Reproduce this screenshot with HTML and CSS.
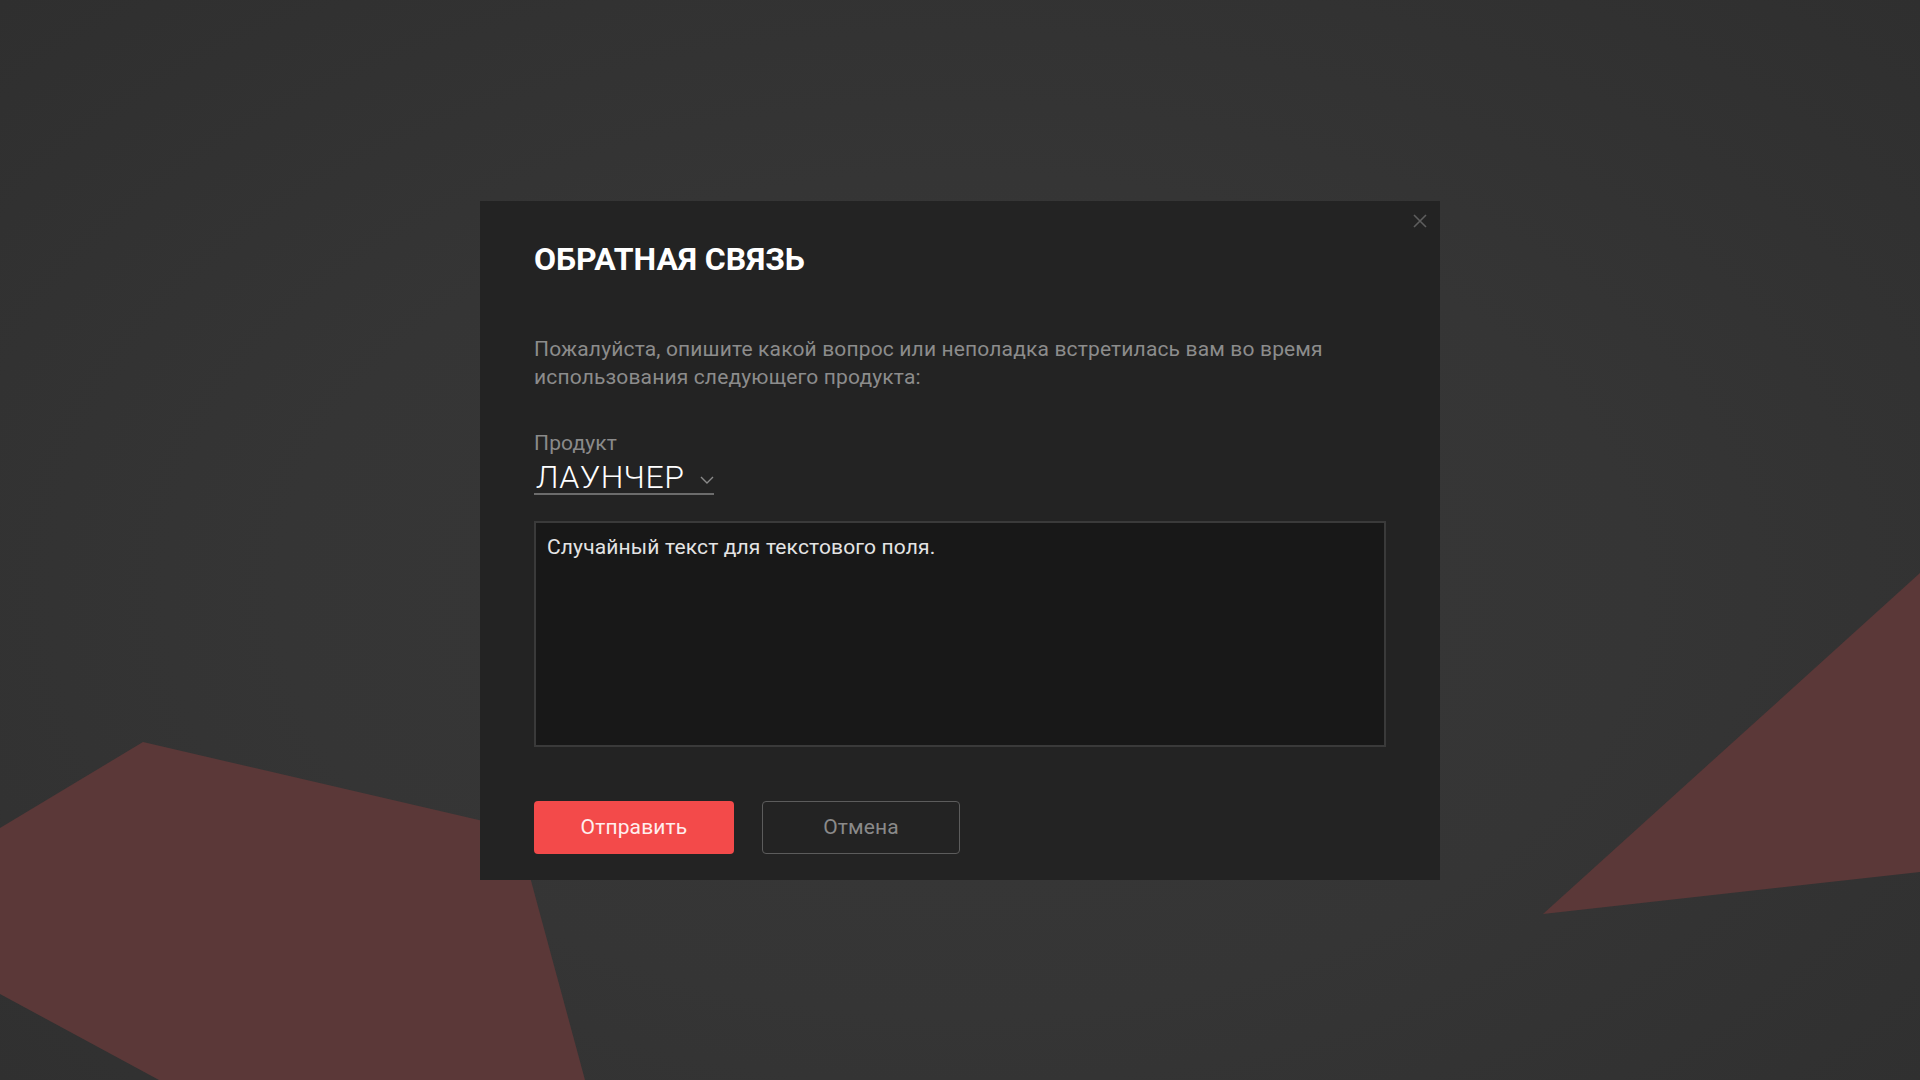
FILE: index.html
```html
<!DOCTYPE html>
<html lang="ru">
<head>
<meta charset="utf-8">
<title>Обратная связь</title>
<link rel="stylesheet" href="styles.css">
</head>
<body>
<div class="screen">
  <svg class="backdrop" width="1920" height="1080" viewBox="0 0 1920 1080" aria-hidden="true">
    <polygon points="0,828 143,742 517,829 585,1080 159,1080 0,994" fill="#5b3838"/>
    <polygon points="1920,573 1543,914 1920,872" fill="#5b3838"/>
  </svg>
  <div class="dialog">
    <button class="close" aria-label="Закрыть">
      <svg width="14" height="14" viewBox="0 0 14 14"><path d="M1 1L13 13M13 1L1 13" stroke="#5e5e5e" stroke-width="1.6" fill="none"/></svg>
    </button>
    <h1 class="title">ОБРАТНАЯ СВЯЗЬ</h1>
    <p class="lead">Пожалуйста, опишите какой вопрос или неполадка встретилась вам во время использования следующего продукта:</p>
    <div class="field">
      <div class="field-label">Продукт</div>
      <div class="select">
        <span class="select-value">ЛАУНЧЕР</span>
        <svg class="chev" width="14" height="8" viewBox="0 0 14 8"><path d="M1 1L7 7L13 1" stroke="#8a8a8a" stroke-width="1.4" fill="none"/></svg>
      </div>
    </div>
    <div class="textarea">Случайный текст для текстового поля.</div>
    <div class="actions">
      <button class="btn btn-primary">Отправить</button>
      <button class="btn btn-secondary">Отмена</button>
    </div>
  </div>
</div>
</body>
</html>
```

FILE: styles.css
```css
* { box-sizing: border-box; }
html, body { margin: 0; padding: 0; }
body {
  width: 1920px;
  height: 1080px;
  overflow: hidden;
  font-family: Roboto, "Noto Sans", "Liberation Sans", sans-serif;
  background: #343434;
}
.screen {
  position: relative;
  width: 1920px;
  height: 1080px;
  display: flex;
  align-items: center;
  justify-content: center;
  background: radial-gradient(ellipse at 50% 55%, #383838 0%, #353535 50%, #2f2f2f 100%);
}
.backdrop {
  position: absolute;
  left: 0;
  top: 0;
}
.dialog {
  position: relative;
  width: 960px;
  height: 679px;
  background: #232323;
  padding: 40px 54px 26px;
  display: flex;
  flex-direction: column;
}
.close {
  position: absolute;
  top: 13px;
  right: 13px;
  width: 14px;
  height: 14px;
  padding: 0;
  border: 0;
  background: none;
  display: flex;
}
.title {
  margin: 0;
  font-size: 32px;
  line-height: 36px;
  font-weight: 700;
  color: #ffffff;
}
.lead {
  margin: 58px 0 0;
  font-size: 21px;
  letter-spacing: 0.15px;
  line-height: 28px;
  color: #8c8c8c;
  max-width: 840px;
}
.field {
  margin-top: 38px;
  display: flex;
  flex-direction: column;
  align-items: flex-start;
}
.field-label {
  font-size: 21px;
  letter-spacing: 0.15px;
  line-height: 28px;
  color: #8a8a8a;
}
.select {
  margin-top: 4px;
  display: inline-flex;
  align-items: center;
  gap: 15px;
  padding: 0 0 0 2px;
  border-bottom: 2px solid #6c6c6c;
}
.select-value {
  font-size: 32px;
  letter-spacing: 0.6px;
  line-height: 32px;
  font-weight: 300;
  color: #ffffff;
}
.chev { margin-top: 6px; }
.textarea {
  margin-top: 26px;
  height: 226px;
  background: #181818;
  border: 2px solid #3a3a3a;
  padding: 10px 11px;
  font-size: 21px;
  letter-spacing: 0.15px;
  line-height: 28px;
  color: #e4e4e4;
}
.actions {
  margin-top: auto;
  display: flex;
  gap: 28px;
}
.btn {
  width: 200px;
  height: 53px;
  border-radius: 4px;
  font-family: Roboto, "Noto Sans", sans-serif;
  font-size: 21px;
  letter-spacing: 0.15px;
  padding: 0;
}
.btn-primary {
  background: #f34a4a;
  border: 0;
  color: #ffeeee;
}
.btn-secondary {
  width: 198px;
  background: transparent;
  border: 1px solid #5c5c5c;
  color: #8a8a8a;
}
```
